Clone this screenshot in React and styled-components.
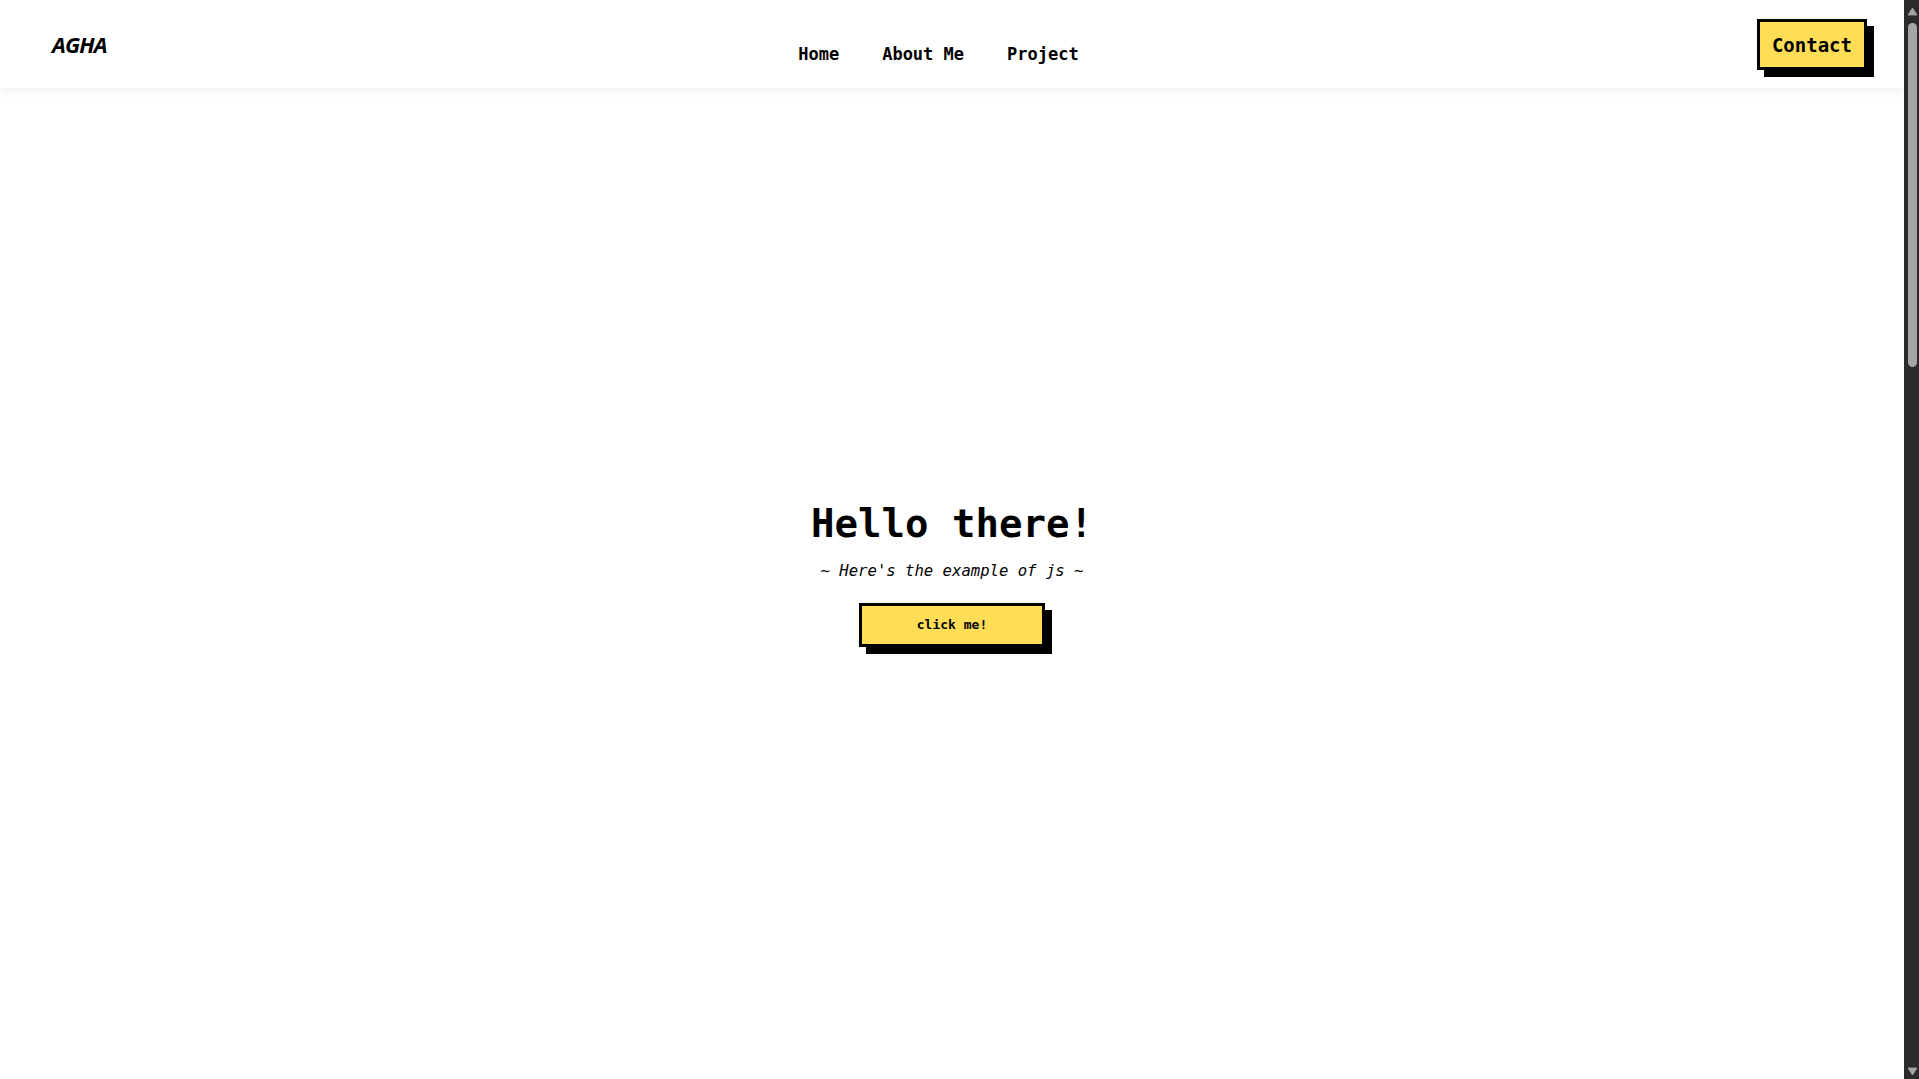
import styled, { createGlobalStyle } from 'styled-components';

const GlobalStyle = createGlobalStyle`
  body {
    margin: 0;
    overflow: hidden;
    background-color: #fff;
    color: #000;
    font-family: 'DejaVu Sans Mono', 'Liberation Mono', monospace;
  }

  * {
    box-sizing: border-box;
  }
`;

function Arrow({ down }) {
  return (
    <svg width="15" height="17" viewBox="0 0 15 17">
      <path
        d={down ? 'M4 6 L13 6 L8.5 13 Z' : 'M8.5 8 L13 15 L4 15 Z'}
        fill="#a5a5a5"
        strokeLinejoin="round"
        stroke="#a5a5a5"
        strokeWidth="0.8"
      />
    </svg>
  );
}

export default function App() {
  return (
    <Window>
      <GlobalStyle />
      <Page>
        <Header>
          <Logo>AGHA</Logo>
          <NavList>
            <NavItem>Home</NavItem>
            <NavItem>About Me</NavItem>
            <NavItem>Project</NavItem>
          </NavList>
          <ShadowButton $size="contact">Contact</ShadowButton>
        </Header>
        <Hero>
          <Title>Hello there!</Title>
          <Subtitle>~ Here's the example of js ~</Subtitle>
          <ShadowButton $size="small">click me!</ShadowButton>
        </Hero>
        <Section />
        <Section />
      </Page>
      <ScrollRail>
        <Arrow />
        <Thumb />
        <Arrow down />
      </ScrollRail>
    </Window>
  );
}

const Window = styled.div`
  display: flex;
  height: 100vh;
`;

const Page = styled.main`
  flex: 1;
  overflow: hidden;
`;

const ScrollRail = styled.aside`
  display: flex;
  flex-direction: column;
  justify-content: space-between;

  width: 15px;
  background-color: #2b2b2b;
`;

const Thumb = styled.div`
  width: 9px;
  height: 344px;
  margin: 6px 0 auto 4px;
  border-radius: 5px;
  background-color: #a5a5a5;
`;

const Header = styled.header`
  display: flex;
  justify-content: space-between;
  align-items: center;

  height: 88px;
  padding: 0 37px 0 52px;
  background-color: #fff;
  box-shadow: 0 2px 10px rgba(0, 0, 0, 0.08);
  position: relative;
  z-index: 1;
`;

const Logo = styled.h2`
  width: 68px;
  margin: 0;
  font-family: 'Open Sans', 'Noto Sans', sans-serif;
  font-size: 22px;
  font-style: italic;
  font-weight: 700;
  letter-spacing: -0.9px;
`;

const NavList = styled.ul`
  display: flex;
  gap: 43px;
  list-style: none;
  margin: 20px 0 0 0;
  padding: 0;
`;

const NavItem = styled.li`
  font-size: 17px;
  font-weight: 700;
`;

const ShadowButton = styled.button`
  font-family: 'DejaVu Sans Mono', 'Liberation Mono', monospace;
  font-weight: 700;
  color: #000;
  background-color: #ffdd57;
  border: 3px solid #000;
  box-shadow: 7px 7px 0 #000;
  cursor: pointer;

  font-size: ${({ $size }) => ($size === 'contact' ? '19px' : '13px')};
  line-height: ${({ $size }) => ($size === 'contact' ? '44px' : '38px')};
  padding: ${({ $size }) => ($size === 'contact' ? '1px 12px 0' : '0 55px')};
`;

const Hero = styled.section`
  display: flex;
  flex-direction: column;
  align-items: center;

  height: 990px;
  padding-top: 414px;
`;

const Title = styled.h1`
  margin: 0;
  font-size: 39px;
  font-weight: 700;
  line-height: 44px;
`;

const Subtitle = styled.p`
  margin: 16px 0 23px;
  font-size: 15.6px;
  font-style: italic;
`;

const Section = styled.section`
  height: 1100px;
`;
